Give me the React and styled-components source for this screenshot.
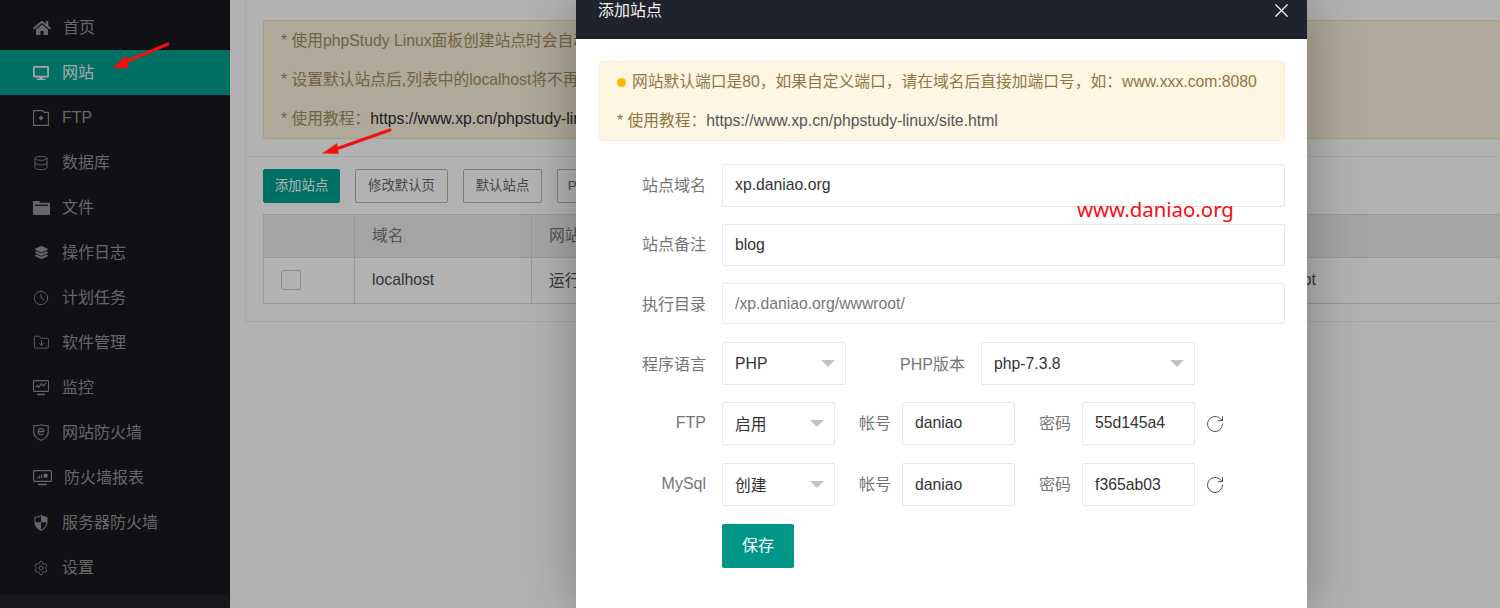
import React from "react";
import styled, { createGlobalStyle } from "styled-components";
import { FaHome, FaDesktop, FaLayerGroup } from "react-icons/fa";
import { Database, Clock, FolderDown, Settings, RotateCw, X } from "lucide-react";

const FONT = `"Liberation Sans", "Noto Sans CJK SC", sans-serif`;

const Global = createGlobalStyle`
  html, body { margin: 0; padding: 0; height: 608px; overflow: hidden; background: #fff; }
  * { box-sizing: border-box; }
  body { font-family: ${FONT}; font-size: 15.75px; color: #333; }
`;

const Page = styled.div`
  position: relative;
  width: 1500px;
  height: 608px;
  overflow: hidden;
  display: flex;
`;
const Sidebar = styled.aside`
  width: 230px;
  flex: none;
  background: #17181f;
  display: flex;
  flex-direction: column;
`;
const Nav = styled.nav`
  padding-top: 5px;
  margin-bottom: 5px;
`;
const NavItem = styled.div`
  height: 45px;
  display: flex;
  align-items: center;
  padding-left: 33px;
  gap: ${(p) => p.$gap || 13}px;
  font-size: 16px;
  color: ${(p) => (p.$active ? "#f0f0f0" : "#949494")};
  background: ${(p) => (p.$active ? "#009f90" : "transparent")};
  svg { flex: none; display: block; }
`;
const NavText = styled.span`
  padding-bottom: ${(p) => (p.$latin ? 0 : 4)}px;
`;
const IconBox = styled.span`
  width: ${(p) => p.$w || 16}px;
  display: flex;
  justify-content: center;
`;
const SideFoot = styled.div`
  flex: 1;
  background: #212229;
`;
const Main = styled.main`
  flex: 1;
  min-width: 0;
  padding-left: 15px;
  display: flex;
  flex-direction: column;
  background: #fff;
`;
const TopCard = styled.section`
  height: 157px;
  padding: 20px 0 0 17px;
  border-left: 1px solid rgba(0, 0, 0, 0.05);
  border-bottom: 1px solid rgba(0, 0, 0, 0.07);
`;
const Notice = styled.div`
  background: #f9f2dc;
  border: 1px solid #eee0bd;
  border-right: 0;
  border-radius: 3px 0 0 3px;
  height: 119px;
  padding-left: 17px;
  line-height: 39px;
  color: #a58c60;
  white-space: nowrap;
`;
const Link = styled.span`
  color: #2b2b33;
`;
const ListCard = styled.section`
  height: 165px;
  padding: 12px 0 0 17px;
  border-left: 1px solid rgba(0, 0, 0, 0.05);
  border-bottom: 1px solid rgba(0, 0, 0, 0.07);
`;
const Toolbar = styled.div`
  display: flex;
  gap: 15px;
  height: 34px;
  margin-bottom: 11px;
`;
const ToolBtn = styled.div`
  height: 34px;
  width: ${(p) => p.$w}px;
  padding-bottom: 4px;
  display: flex;
  align-items: center;
  justify-content: center;
  font-size: 13.4px;
  border-radius: 2px;
  color: ${(p) => (p.$primary ? "#fff" : "#666")};
  background: ${(p) => (p.$primary ? "#009f90" : "transparent")};
  border: 1px solid ${(p) => (p.$primary ? "#009f90" : "#b5b5b5")};
`;
const Table = styled.table`
  border-collapse: collapse;
  table-layout: fixed;
  width: 1237px;
  font-size: 15.75px;
`;
const Th = styled.th`
  height: 43px;
  background: #ececec;
  border: 1px solid #dcdcdc;
  border-right: ${(p) => (p.$last ? 0 : "1px solid #dcdcdc")};
  font-weight: 400;
  text-align: left;
  padding: 0 0 4px 17px;
  color: #777;
`;
const Td = styled.td`
  height: 46px;
  border: 1px solid #dcdcdc;
  border-right: ${(p) => (p.$last ? 0 : "1px solid #dcdcdc")};
  padding: 0 0 2px 17px;
  color: #4c4c4c;
  white-space: nowrap;
`;
const Check = styled.div`
  width: 20px;
  height: 20px;
  border: 1px solid #c8c8c8;
  border-radius: 2px;
`;
const Overlay = styled.div`
  position: absolute;
  inset: 0;
  background: rgba(0, 0, 0, 0.3);
`;
const Modal = styled.div`
  position: absolute;
  left: 576px;
  top: 0;
  width: 731px;
  height: 608px;
  background: #fff;
  box-shadow: 1px 1px 50px rgba(0, 0, 0, 0.3);
`;
const ModalHead = styled.header`
  height: 39px;
  background: #1f232c;
  color: #f2f2f2;
  font-size: 16px;
  display: flex;
  justify-content: space-between;
  padding: 0 14px 18px 22px;
  align-items: center;
  line-height: 21px;
`;
const ModalBody = styled.div`
  padding: 22px 22px 0 23px;
`;
const Alert = styled.div`
  height: 80px;
  border: 1px solid #f8eed5;
  border-radius: 4px;
  background: #fdf6e3;
  padding-left: 17px;
  line-height: 39px;
  color: #8f7746;
  margin-bottom: 23px;
  white-space: nowrap;
`;
const Dot = styled.span`
  display: inline-block;
  width: 9px;
  height: 9px;
  border-radius: 50%;
  background: #ffb800;
  margin-right: 6px;
`;
const AlertLink = styled.span`
  color: #555;
`;
const Row = styled.div`
  display: flex;
  align-items: center;
  height: ${(p) => p.$h}px;
  margin-bottom: ${(p) => p.$mb ?? 17}px;
`;
const Label = styled.label`
  width: ${(p) => p.$w || 107}px;
  margin-right: ${(p) => p.$mr ?? 16}px;
  margin-left: ${(p) => p.$ml || 0}px;
  padding-bottom: ${(p) => (p.$low ? 2 : 4)}px;
  flex: none;
  font-size: 16px;
  text-align: right;
  color: #757575;
  white-space: nowrap;
`;
const Field = styled.div`
  width: ${(p) => (p.$w ? `${p.$w}px` : "100%")};
  flex: ${(p) => (p.$w ? "none" : 1)};
  height: 100%;
  border: 1px solid #e6e6e6;
  border-radius: 2px;
  padding: 0 0 ${(p) => (p.$low ? 0 : 1)}px 12px;
  display: flex;
  align-items: center;
  color: ${(p) => (p.$muted ? "#777" : "#333")};
  background: #fff;
`;
const Select = styled(Field)`
  justify-content: space-between;
  padding-right: 10px;
  &::after {
    content: "";
    border-style: solid;
    border-width: 7px 7px 0;
    border-color: #c2c2c2 transparent transparent;
  }
`;
const Refresh = styled.span`
  margin-left: 10px;
  display: flex;
  color: #444;
`;
const Save = styled.div`
  margin-left: 123px;
  width: 72px;
  height: 44px;
  padding-bottom: 4px;
  border-radius: 2px;
  background: #009688;
  color: #fff;
  font-size: 16px;
  display: flex;
  align-items: center;
  justify-content: center;
`;
const Arrows = styled.svg`
  position: absolute;
  inset: 0;
  pointer-events: none;
`;
const Watermark = styled.div`
  position: absolute;
  left: 1077px;
  top: 194px;
  font-family: "Noto Sans", sans-serif;
  font-size: 20.4px;
  line-height: 30px;
  color: #f80d14;
`;

const Ftp = () => (
  <svg width="16" height="16" viewBox="0 0 16 16" fill="none" stroke="currentColor" strokeWidth="1.1">
    <path d="M.6.6h9l1.6 1.8h4.2v13H.6z" />
    <path d="M8 5.6l2.4 2.4L8 10.4 5.6 8z" fill="currentColor" stroke="none" />
  </svg>
);
const Folder = () => (
  <svg width="17" height="14" viewBox="0 0 17 14">
    <path d="M0 1a1 1 0 0 1 1-1h5l1.5 1.8H16a1 1 0 0 1 1 1V13a1 1 0 0 1-1 1H1a1 1 0 0 1-1-1z" fill="currentColor" />
    <path d="M2 4.3h13" stroke="#17181f" strokeWidth="1.2" />
  </svg>
);
const MonitorChart = ({ wide }) => (
  <svg width={wide ? 19 : 16} height="16" viewBox="0 0 19 16" fill="none" stroke="currentColor" strokeWidth="1.1" preserveAspectRatio="none">
    <rect x=".6" y=".6" width="17.8" height="10.8" rx="1" strokeWidth="1.2" />
    {wide ? (
      <>
        <path d="M4.5 8.5V7M6.5 8.5V5.5M8.5 8.5V4.5" strokeWidth="1.1" />
        <circle cx="12.6" cy="5.8" r="2.2" fill="currentColor" stroke="none" />
      </>
    ) : (
      <path d="M3 7l2.5-1.5L7 7.5l3-4 2 2.5 3.5-3" />
    )}
    <path d="M5 14.500h9" strokeWidth="1.5" />
  </svg>
);
const ShieldE = () => (
  <svg width="16" height="17" viewBox="0 0 16 17" fill="none" stroke="currentColor" strokeWidth="1.1">
    <path d="M.8 1.5C3 2 5.500 1.800 8 .7c2.500 1.100 5 1.300 7.200.8V8c0 4-3 6.800-7.200 8.300C3.800 14.800.8 12 .8 8z" />
    <path d="M5.200 7.600h5.500c0-1.800-1.100-3-2.700-3s-2.800 1.300-2.800 3 1.100 3.100 2.900 3.100c1 0 1.800-.3 2.400-.9" />
  </svg>
);
const ShieldHalf = () => (
  <svg width="14" height="16" viewBox="0 0 14 16">
    <path d="M7 0c2 1.100 4.200 1.700 6.500 1.900V7c0 4-2.700 7.200-6.500 9C3.200 14.200.500 11 .500 7V1.900C2.800 1.700 5 1.100 7 0z" fill="currentColor" />
    <path d="M7 1.300v6H1.500V3c2-.2 3.800-.8 5.500-1.700zM7 7.300h5.500c-.2 3.300-2.400 6-5.500 7.500z" fill="#17181f" />
  </svg>
);

const items = [
  { label: "首页", icon: <FaHome size={18} />, w: 18, gap: 12 },
  { label: "网站", icon: <FaDesktop size={16} />, gap: 13, active: true },
  { label: "FTP", icon: <Ftp />, gap: 13, latin: true },
  { label: "数据库", icon: <Database size={16} strokeWidth={1.3} />, gap: 13 },
  { label: "文件", icon: <Folder />, w: 17, gap: 12 },
  { label: "操作日志", icon: <FaLayerGroup size={13} />, gap: 13 },
  { label: "计划任务", icon: <Clock size={16} strokeWidth={1.3} />, gap: 13 },
  { label: "软件管理", icon: <FolderDown size={17} strokeWidth={1.2} />, gap: 13 },
  { label: "监控", icon: <MonitorChart />, gap: 13 },
  { label: "网站防火墙", icon: <ShieldE />, gap: 13 },
  { label: "防火墙报表", icon: <MonitorChart wide />, w: 19, gap: 12 },
  { label: "服务器防火墙", icon: <ShieldHalf />, gap: 13 },
  { label: "设置", icon: <Settings size={16} strokeWidth={1.2} />, gap: 13 },
];

export default function App() {
  return (
    <Page>
      <Global />
      <Sidebar>
        <Nav>
          {items.map((it) => (
            <NavItem key={it.label} $active={it.active} $gap={it.gap}>
              <IconBox $w={it.w}>{it.icon}</IconBox>
              <NavText $latin={it.latin}>{it.label}</NavText>
            </NavItem>
          ))}
        </Nav>
        <SideFoot />
      </Sidebar>
      <Main>
        <TopCard>
          <Notice>
            <div>* 使用phpStudy Linux面板创建站点时会自动</div>
            <div>* 设置默认站点后,列表中的localhost将不再</div>
            <div>* 使用教程：<Link>https://www.xp.cn/phpstudy-lin</Link></div>
          </Notice>
        </TopCard>
        <ListCard>
          <Toolbar>
            <ToolBtn $primary $w={77}>添加站点</ToolBtn>
            <ToolBtn $w={93}>修改默认页</ToolBtn>
            <ToolBtn $w={79}>默认站点</ToolBtn>
            <ToolBtn $w={76}>PHP版本</ToolBtn>
          </Toolbar>
          <Table>
            <colgroup>
              <col width="91" />
              <col width="177" />
              <col width="549" />
              <col />
            </colgroup>
            <thead>
              <tr>
                <Th />
                <Th>域名</Th>
                <Th>网站名</Th>
                <Th $last>根目录</Th>
              </tr>
            </thead>
            <tbody>
              <tr>
                <Td><Check /></Td>
                <Td>localhost</Td>
                <Td>运行中</Td>
                <Td $last>/www/admin/localhost/wwwroot</Td>
              </tr>
            </tbody>
          </Table>
        </ListCard>
      </Main>
      <Overlay />
      <Modal>
        <ModalHead>
          <span>添加站点</span>
          <X size={23} strokeWidth={1.35} />
        </ModalHead>
        <ModalBody>
          <Alert>
            <div><Dot />网站默认端口是80，如果自定义端口，请在域名后直接加端口号，如：www.xxx.com:8080</div>
            <div>* 使用教程：<AlertLink>https://www.xp.cn/phpstudy-linux/site.html</AlertLink></div>
          </Alert>
          <Row $h={43}>
            <Label>站点域名</Label>
            <Field>xp.daniao.org</Field>
          </Row>
          <Row $h={42}>
            <Label>站点备注</Label>
            <Field>blog</Field>
          </Row>
          <Row $h={41} $mb={18}>
            <Label $low>执行目录</Label>
            <Field $muted $low>/xp.daniao.org/wwwroot/</Field>
          </Row>
          <Row $h={43}>
            <Label $low>程序语言</Label>
            <Select $w={124} $low>PHP</Select>
            <Label $low $w={65} $ml={54}>PHP版本</Label>
            <Select $w={214} $low>php-7.3.8</Select>
          </Row>
          <Row $h={43} $mb={18}>
            <Label $low>FTP</Label>
            <Select $w={113}>启用</Select>
            <Label $w={32} $ml={24} $mr={11}>帐号</Label>
            <Field $w={113}>daniao</Field>
            <Label $w={32} $ml={24} $mr={11}>密码</Label>
            <Field $w={113}>55d145a4</Field>
            <Refresh><RotateCw size={20} strokeWidth={1.1} /></Refresh>
          </Row>
          <Row $h={43} $mb={18}>
            <Label $low>MySql</Label>
            <Select $w={113}>创建</Select>
            <Label $w={32} $ml={24} $mr={11}>帐号</Label>
            <Field $w={113} $low>daniao</Field>
            <Label $w={32} $ml={24} $mr={11}>密码</Label>
            <Field $w={113} $low>f365ab03</Field>
            <Refresh><RotateCw size={20} strokeWidth={1.1} /></Refresh>
          </Row>
          <Save>保存</Save>
        </ModalBody>
      </Modal>
      <Arrows width="1500" height="608" viewBox="0 0 1500 608">
        <g fill="#f01010" stroke="#f01010" strokeLinecap="round">
          <path d="M168 44L125 62" strokeWidth="3" fill="none" />
          <path d="M113 67.500L126 56l1 5 .5 3 .5 4z" strokeWidth=".5" />
          <path d="M390 130L336 149" strokeWidth="3" fill="none" />
          <path d="M323 153l14-9.500 .5 5 1 5z" strokeWidth=".5" />
        </g>
      </Arrows>
      <Watermark>www.daniao.org</Watermark>
    </Page>
  );
}
